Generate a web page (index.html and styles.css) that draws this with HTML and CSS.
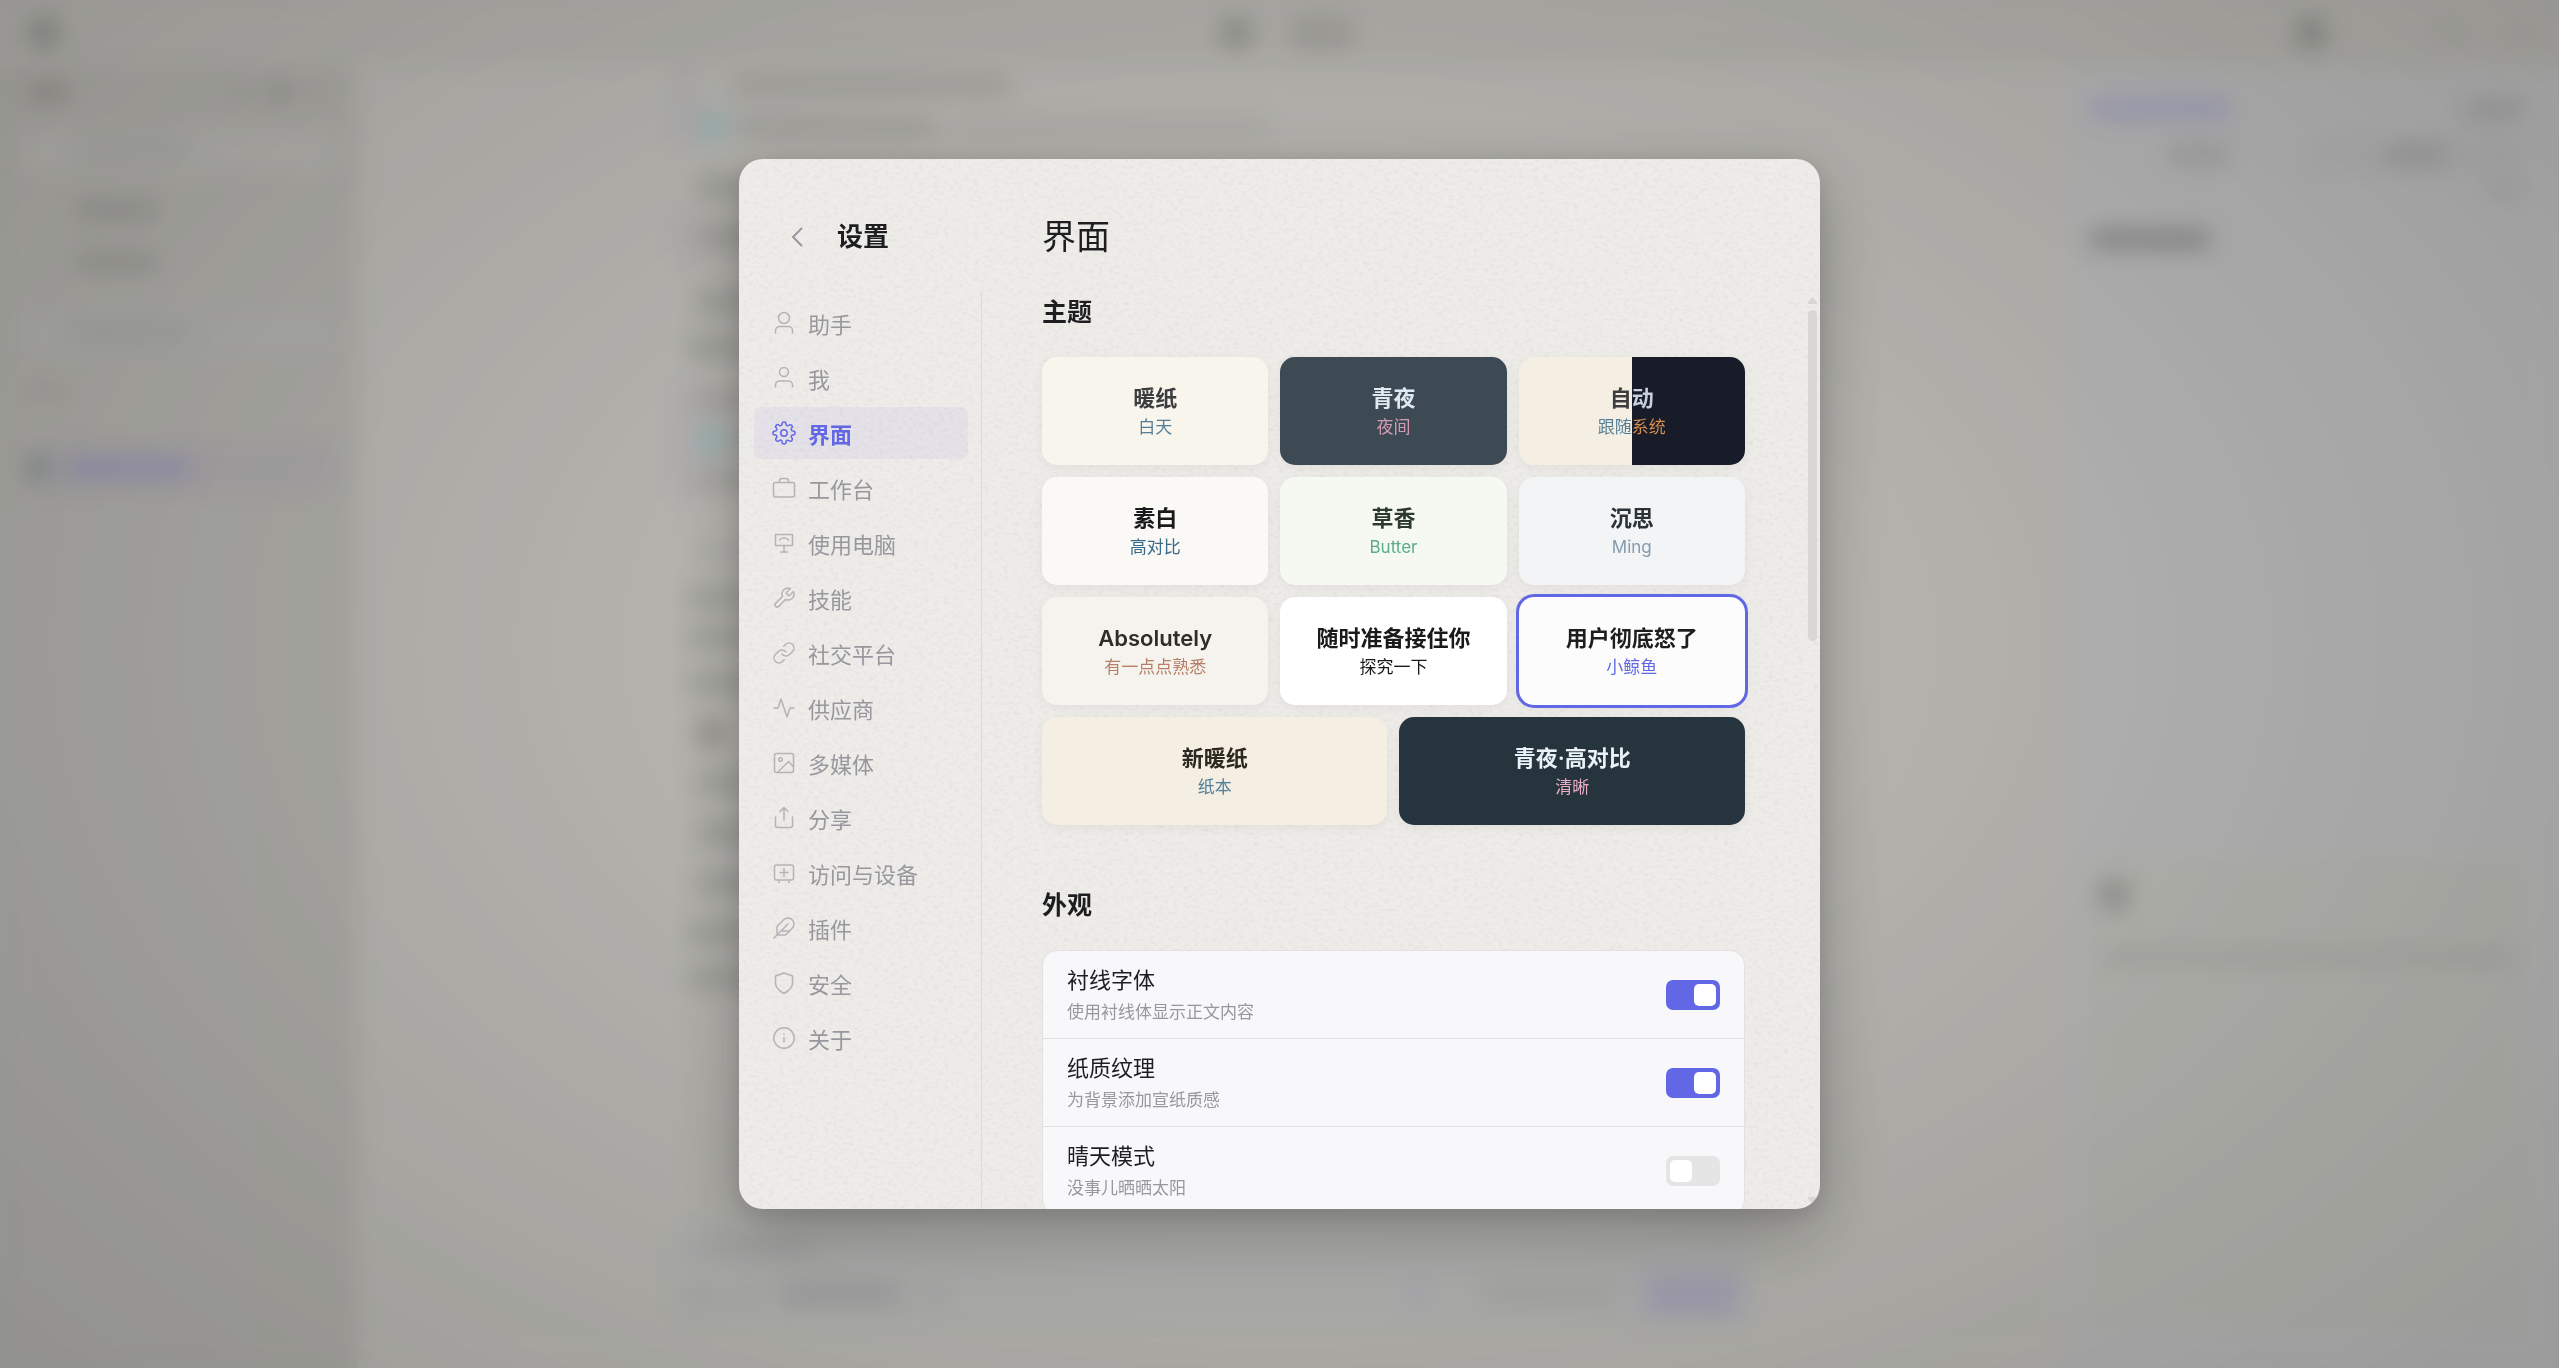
FILE: index.html
```html
<!DOCTYPE html>
<html lang="zh-CN">
<head>
<meta charset="utf-8">
<meta name="viewport" content="width=device-width, initial-scale=1">
<title>设置 - 界面</title>
<link rel="stylesheet" href="styles.css">
</head>
<body>
<div class="app" aria-hidden="true">
  <div class="topbar">
    <div class="topbar-side"><i class="blob"></i></div>
    <div class="topbar-tabs"><i class="blob"></i><i class="chip"></i></div>
    <div class="topbar-side topbar-end"><i class="blob"></i><i class="spacer-m"></i><i class="bar w20 faint"></i><i class="bar w20 faint"></i></div>
  </div>
  <div class="workspace">
    <div class="sidebar">
      <div class="side-row"><i class="bar w40"></i><i class="spacer"></i><i class="bar w20 faint"></i><i class="bar w20"></i><i class="bar w20 faint"></i></div>
      <div class="side-field"><i class="bar w120 faint"></i></div>
      <div class="side-row indent"><i class="bar w80 soft"></i></div>
      <div class="side-row indent"><i class="bar w80 soft"></i></div>
      <div class="side-field cool"><i class="bar w120 faint"></i></div>
      <div class="side-row"><i class="bar w40 faint"></i></div>
      <div class="side-row current"><i class="bar w20 green"></i><i class="bar w120 violet"></i></div>
    </div>
    <div class="main">
      <div class="chat">
        <div class="quote"><div class="line"><i class="bar w20 hidden"></i><i class="bar w280 soft"></i></div><div class="line"><i class="dot"></i><i class="bar w200 soft"></i><i class="bar w320 faint"></i></div></div>
        <div class="line tall"><i class="bar w320"></i></div>
        <div class="quote"><div class="line tall"><i class="bar w320"></i></div></div>
        <div class="line tall"><i class="bar w320"></i></div>
        <div class="line outer"><i class="bar w320"></i></div>
        <div class="quote long"><div class="line"><i class="bar w320 soft"></i></div><div class="line"><i class="dot"></i><i class="bar w320"></i></div><div class="line"><i class="bar w320 soft"></i></div></div>
        <div class="line tall"><i class="bar w320 faint"></i></div>
        <div class="line outer"><i class="bar w320"></i></div>
        <div class="line outer"><i class="bar w320"></i></div>
        <div class="line tall outer"><i class="bar w320"></i></div>
        <div class="line tall"><i class="blob"></i></div>
        <div class="line tall"><i class="bar w320"></i></div>
        <div class="line tall"><i class="bar w320"></i></div>
        <div class="line tall"><i class="bar w320"></i></div>
        <div class="line tall outer"><i class="bar w320"></i></div>
        <div class="line outer"><i class="bar w320"></i></div>
      </div>
      <div class="composer">
        <div class="composer-row"><i class="bar w120 faint"></i></div>
        <div class="composer-row"><i class="bar w20 faint"></i><i class="bar w20 faint"></i><i class="bar w120 soft"></i><i class="bar w20 faint"></i><i class="spacer"></i><i class="bar w20 violet faint"></i><i class="spacer-s"></i><i class="bar w140 faint"></i><i class="send"></i></div>
      </div>
    </div>
    <div class="panel">
      <div class="panel-row"><i class="bar w140 violet"></i><i class="spacer"></i><i class="bar w60 soft"></i></div>
      <div class="panel-tabs"><div><i class="bar w60 soft"></i></div><div class="tab-off"><i class="bar w60 soft"></i></div></div>
      <div class="panel-row thin"><i class="spacer"></i><i class="bar w40 faint"></i></div>
      <div class="panel-row heading"><i class="bar w120 strong"></i></div>
      <div class="note"><i class="blob"></i><i class="bar wide faint"></i></div>
    </div>
  </div>
</div>

<div class="overlay">
<section class="modal" role="dialog" aria-modal="true" aria-labelledby="dialog-title">
  <svg class="paper" aria-hidden="true">
    <filter id="grain" x="0" y="0" width="100%" height="100%">
      <feTurbulence type="fractalNoise" baseFrequency="0.2 0.3" numOctaves="3" seed="7"/>
      <feColorMatrix values="0 0 0 0 .4  0 0 0 0 .38  0 0 0 0 .34  .34 0 0 0 -.16"/>
    </filter>
    <rect width="100%" height="100%" filter="url(#grain)"/>
  </svg>

  <header class="side-head">
    <button class="back" type="button" aria-label="返回">
      <svg viewBox="0 0 24 24"><path d="M16.500 3.500 8 12l8.500 8.500"/></svg>
    </button>
    <h1 id="dialog-title">设置</h1>
  </header>
  <header class="page-head"><h2>界面</h2></header>

  <nav class="nav" aria-label="设置">
    <a href="#assistant"><svg viewBox="0 0 24 24"><circle cx="12" cy="7" r="5.500"/><path d="M3.500 22v-2.500a4 4 0 0 1 4-4h9a4 4 0 0 1 4 4V22"/></svg>助手</a>
    <a href="#me"><svg viewBox="0 0 24 24"><circle cx="12" cy="6" r="4.500"/><path d="M3.500 21v-2a4 4 0 0 1 4-4h9a4 4 0 0 1 4 4v2"/></svg>我</a>
    <a href="#interface" class="active" aria-current="page"><svg viewBox="0 0 24 24"><circle cx="12" cy="12" r="3.200"/><path d="M19.400 15a1.650 1.650 0 0 0 .33 1.820l.06.06a2 2 0 1 1-2.830 2.830l-.06-.06a1.650 1.650 0 0 0-2.800 1.170V21a2 2 0 0 1-4 0v-.09a1.650 1.650 0 0 0-2.880-1.260l-.06.06a2 2 0 1 1-2.830-2.830l.06-.06a1.650 1.650 0 0 0-1.170-2.800H3a2 2 0 0 1 0-4h.09a1.650 1.650 0 0 0 1.260-2.880l-.06-.06a2 2 0 1 1 2.830-2.830l.06.06a1.650 1.650 0 0 0 1.820.33H9a1.650 1.650 0 0 0 1-1.510V3a2 2 0 0 1 4 0v.09a1.650 1.650 0 0 0 2.820 1.230l.06-.06a2 2 0 1 1 2.830 2.830l-.06.06a1.650 1.650 0 0 0-.33 1.820V9a1.650 1.650 0 0 0 1.510 1H21a2 2 0 0 1 0 4h-.09a1.650 1.650 0 0 0-1.510 1z"/></svg>界面</a>
    <a href="#workbench"><svg viewBox="0 0 24 24"><rect x="1.500" y="6.500" width="21" height="14.500" rx="2"/><path d="M7.500 6.500V5a2.500 2.500 0 0 1 2.500-2.500h4A2.500 2.500 0 0 1 16.500 5v1.500"/></svg>工作台</a>
    <a href="#computer"><svg viewBox="0 0 24 24"><rect x="3.500" y="3.500" width="17" height="11"/><path d="M12 14.500V21M8.500 21h7M7.500 9q4.500-4.500 9 0"/></svg>使用电脑</a>
    <a href="#skills"><svg viewBox="0 0 24 24"><path d="M14.700 6.300a1 1 0 0 0 0 1.400l1.600 1.600a1 1 0 0 0 1.400 0l3.770-3.770a6 6 0 0 1-7.940 7.940l-6.910 6.910a2.120 2.120 0 0 1-3-3l6.910-6.910a6 6 0 0 1 7.940-7.940l-3.760 3.760z"/></svg>技能</a>
    <a href="#social"><svg viewBox="0 0 24 24"><path d="M10 13a5 5 0 0 0 7.540.54l3-3a5 5 0 0 0-7.070-7.070l-1.720 1.710"/><path d="M14 11a5 5 0 0 0-7.540-.54l-3 3a5 5 0 0 0 7.070 7.070l1.710-1.710"/></svg>社交平台</a>
    <a href="#providers"><svg viewBox="0 0 24 24"><path d="M22 12h-4l-3 9L9 3l-3 9H2"/></svg>供应商</a>
    <a href="#media"><svg viewBox="0 0 24 24"><rect x="2.500" y="2.500" width="19" height="19" rx="2"/><circle cx="8.500" cy="8.500" r="1.800"/><path d="M21.500 15.500 16.500 10.500 5.500 21.500"/></svg>多媒体</a>
    <a href="#share"><svg viewBox="0 0 24 24"><path d="M3.500 11v8.500a2 2 0 0 0 2 2h13a2 2 0 0 0 2-2V11M16 5.500l-4-4-4 4M12 1.500v13"/></svg>分享</a>
    <a href="#devices"><svg viewBox="0 0 24 24"><rect x="2.500" y="4" width="19" height="15" rx="2"/><path d="M12 7.500v8M8 11.500h8M7 19v2.500M17 19v2.500"/></svg>访问与设备</a>
    <a href="#plugins"><svg viewBox="0 0 24 24"><path d="M20.240 12.240a6 6 0 0 0-8.490-8.490L5 10.500V19h8.500z"/><path d="M16 8 2 22M17.500 15H9"/></svg>插件</a>
    <a href="#security"><svg viewBox="0 0 24 24"><path d="M12 22.500s8.500-4 8.500-10.500V5L12 2 3.500 5v7C3.500 18.500 12 22.500 12 22.500z"/></svg>安全</a>
    <a href="#about"><svg viewBox="0 0 24 24"><circle cx="12" cy="12" r="10.200"/><path d="M12 16v-4.500M12 8v.2"/></svg>关于</a>
  </nav>

  <div class="page">
    <div class="scroll">
      <section>
        <h3>主题</h3>
        <div class="themes">
          <button type="button" class="theme warm"><strong>暖纸</strong><span>白天</span></button>
          <button type="button" class="theme night"><strong>青夜</strong><span>夜间</span></button>
          <button type="button" class="theme auto"><strong>自动</strong><span>跟随系统</span></button>
          <button type="button" class="theme plain"><strong>素白</strong><span>高对比</span></button>
          <button type="button" class="theme grass"><strong>草香</strong><span>Butter</span></button>
          <button type="button" class="theme ming"><strong>沉思</strong><span>Ming</span></button>
          <button type="button" class="theme absolutely"><strong>Absolutely</strong><span>有一点点熟悉</span></button>
          <button type="button" class="theme white"><strong>随时准备接住你</strong><span>探究一下</span></button>
          <button type="button" class="theme whale selected" aria-pressed="true"><strong>用户彻底怒了</strong><span>小鲸鱼</span></button>
          <button type="button" class="theme half new-warm"><strong>新暖纸</strong><span>纸本</span></button>
          <button type="button" class="theme half night-hc"><strong>青夜·高对比</strong><span>清晰</span></button>
        </div>
      </section>
      <section>
        <h3>外观</h3>
        <div class="options">
          <label class="option"><span class="option-text"><span class="option-name">衬线字体</span><span class="option-note">使用衬线体显示正文内容</span></span><input type="checkbox" role="switch" checked></label>
          <label class="option"><span class="option-text"><span class="option-name">纸质纹理</span><span class="option-note">为背景添加宣纸质感</span></span><input type="checkbox" role="switch" checked></label>
          <label class="option"><span class="option-text"><span class="option-name">晴天模式</span><span class="option-note">没事儿晒晒太阳</span></span><input type="checkbox" role="switch"></label>
        </div>
      </section>
    </div>
    <div class="scrollbar" aria-hidden="true"><i class="arrow up"></i><i class="thumb"></i><i class="arrow down"></i></div>
  </div>
</section>
</div>
</body>
</html>
```
FILE: styles.css
```css
:root {
  --accent: #6267e6;
  --ink: #1e1e20;
  --muted: #98979e;
}

* { box-sizing: border-box; }

body {
  margin: 0;
  height: 100vh;
  overflow: hidden;
  font-family: Inter, "Noto Sans CJK SC", sans-serif;
  color: var(--ink);
}

h1, h2, h3 { margin: 0; }
button { font: inherit; border: 0; padding: 0; cursor: pointer; }

/* App behind the dialog */
.app {
  height: 100vh;
  display: flex;
  flex-direction: column;
  background: #b6b5b0;
}
.app i { display: block; flex: none; }
.app .spacer { flex: 1; }
.spacer-s { width: 4px; }
.spacer-m { width: 14px; }

.bar { height: 16px; border-radius: 4px; background: rgba(0, 0, 0, .16); }
.blob { width: 28px; height: 28px; border-radius: 8px; background: rgba(0, 0, 0, .2); }
.soft { background: rgba(0, 0, 0, .13); }
.strong { background: rgba(0, 0, 0, .28); }
.violet { background: rgba(88, 80, 210, .26); }
.green { background: rgba(40, 80, 70, .4); }
.faint { opacity: .4; }
.hidden { visibility: hidden; }
.w20 { width: 20px; }
.w40 { width: 40px; }
.w60 { width: 60px; }
.w80 { width: 80px; }
.w120 { width: 120px; }
.w140 { width: 140px; }
.w200 { width: 200px; }
.w280 { width: 280px; }
.w320 { width: 320px; }
.app .wide { width: 100%; }

.topbar {
  height: 66px;
  display: flex;
  align-items: center;
  background: rgba(0, 0, 0, .03);
}
.topbar-side { flex: 1; display: flex; align-items: center; padding: 0 30px; }
.topbar-end { justify-content: flex-end; gap: 50px; }
.topbar-tabs { display: flex; align-items: center; gap: 40px; padding-left: 16px; }
.chip { width: 64px; height: 32px; border-radius: 8px; background: rgba(0, 0, 0, .09); }

.workspace { flex: 1; min-height: 0; display: flex; }

.sidebar {
  width: 358px;
  padding: 0 22px;
  background: rgba(0, 0, 0, .06);
}
.side-row { height: 52px; display: flex; align-items: center; gap: 20px; padding: 0 6px; }
.indent { padding-left: 54px; }
.side-field {
  height: 42px;
  margin: 12px 0;
  display: flex;
  align-items: center;
  padding: 0 50px;
  border-radius: 8px;
  background: rgba(255, 255, 255, .08);
}
.cool { background: rgba(180, 182, 190, .2); margin-top: 24px; }
.current { margin-top: 24px; border-radius: 8px; background: rgba(98, 80, 200, .05); }

.main { flex: 1; display: flex; flex-direction: column; justify-content: space-between; align-items: center; padding-bottom: 43px; }
.chat { width: 1073px; }
.line { height: 40px; display: flex; align-items: center; gap: 12px; padding-left: 24px; }
.quote .line { padding-left: 4px; }
.tall { height: 50px; }
.outer { padding-left: 14px; }
.quote { margin-bottom: 16px; border-left: 24px solid rgba(110, 100, 190, .07); }
.long { margin: 12px 0 28px; }
.dot { width: 24px; height: 24px; border-radius: 50%; background: rgba(60, 170, 190, .35); }

.composer {
  width: 1085px;
  padding: 0 12px 6px;
  border-radius: 16px;
  background: rgba(178, 178, 180, .7);
}
.composer-row { height: 48px; display: flex; align-items: center; gap: 24px; padding-left: 14px; }
.send { width: 96px; height: 42px; border-radius: 10px; background: rgba(98, 90, 190, .17); }

.panel {
  width: 499px;
  display: flex;
  flex-direction: column;
  padding: 18px 36px 43px 30px;
  background: rgba(181, 181, 182, .8);
}
.panel-row { height: 50px; display: flex; align-items: center; }
.thin { height: 30px; }
.heading { margin-top: 8px; }
.panel-tabs { display: grid; grid-template-columns: 1fr 1fr; }
.panel-tabs > div { height: 42px; display: grid; place-items: center; border-radius: 8px; }
.tab-off { background: rgba(0, 0, 0, .02); }
.note { flex: none; height: 464px; margin-top: auto; padding: 20px 10px; border-radius: 10px; background: rgba(179, 181, 173, .7); }
.note .bar { margin-top: 40px; }

/* Dialog */
.overlay {
  position: fixed;
  inset: 0;
  display: grid;
  place-items: center;
  background: radial-gradient(ellipse 75% 90% at 50% 47%, rgba(0, 0, 0, .01) 30%, rgba(0, 0, 0, .17) 100%);
  backdrop-filter: blur(12px);
}

.modal {
  position: relative;
  width: min(1081px, 96vw);
  height: min(1050px, 96vh);
  display: grid;
  grid-template-columns: 243px 1fr;
  grid-template-rows: auto 1fr;
  overflow: hidden;
  isolation: isolate;
  border-radius: 24px;
  background: #eeece9;
  box-shadow: 0 24px 72px rgba(0, 0, 0, .24), 0 6px 24px rgba(0, 0, 0, .12);
}
.paper { position: absolute; inset: 0; z-index: -1; width: 100%; height: 100%; }

.side-head, .page-head {
  display: flex;
  align-items: center;
  padding: 56px 0 33px;
  line-height: 44px;
}
.side-head { gap: 18px; padding-left: 36px; }
.page-head { padding-left: 60px; }
.side-head h1 { font-size: 26px; font-weight: 700; white-space: nowrap; }
.page-head h2 { font-size: 34px; font-weight: 400; }

.back { width: 44px; height: 44px; display: grid; place-items: center; background: none; color: var(--muted); }
.back svg { width: 24px; height: 24px; stroke-width: 2; }

svg { fill: none; stroke: currentColor; stroke-width: 1.5; stroke-linecap: round; stroke-linejoin: round; }
.paper { stroke: none; fill: #000; }

.nav {
  display: flex;
  flex-direction: column;
  gap: 3px;
  padding: 5px 13px 0 15px;
  border-right: 1px solid #dcdbd8;
}
.nav a {
  height: 52px;
  display: flex;
  align-items: center;
  gap: 12px;
  padding: 0 18px;
  border-radius: 7px;
  font-size: 22px;
  color: #98979e;
  text-decoration: none;
}
.nav svg { width: 24px; height: 24px; flex: none; color: #b4b3b7; }
.nav .active { background: rgba(98, 103, 230, .07); color: var(--accent); font-weight: 700; }
.nav .active svg { color: var(--accent); }

.page { min-height: 0; display: flex; padding-right: 3px; }
.scroll {
  flex: 1;
  min-width: 0;
  overflow: hidden;
  display: flex;
  flex-direction: column;
  gap: 60px;
  padding: 0 63px 0 60px;
}
.scroll section { flex: none; }
h3 { margin-bottom: 25px; font-size: 25px; line-height: 40px; font-weight: 700; }

.themes { display: grid; grid-template-columns: repeat(6, 1fr); gap: 12px; }
.theme {
  grid-column: span 2;
  height: 108px;
  padding-top: 2px;
  display: flex;
  flex-direction: column;
  justify-content: center;
  border-radius: 15px;
  text-align: center;
  box-shadow: 0 3px 12px rgba(0, 0, 0, .05);
}
.theme strong { font-size: 22px; line-height: 30px; font-weight: 600; }
.theme span { font-size: 17px; line-height: 28px; }
.half { grid-column: span 3; }
.selected { outline: 3px solid var(--accent); }

.warm { background: #f8f5ec; color: #3b3d3f; }
.warm span { color: #537d96; }
.night { background: #3d4a54; color: #dfe9f2; }
.night span { color: #d29bb2; }
.auto { background: linear-gradient(90deg, #f4efe2 50%, #171c28 50%); }
.auto strong, .auto span { color: transparent; background-clip: text; -webkit-background-clip: text; }
.auto strong { background-image: linear-gradient(90deg, #3b3d3f 50%, #c9d1e0 50%); }
.auto span { background-image: linear-gradient(90deg, #537d96 50%, #d98f4e 50%); }
.plain { background: #faf9f5; color: #1a1a1c; }
.plain span { color: #3a6a8a; }
.grass { background: #f6f8f2; color: #2d3a31; }
.grass span { color: #5aad88; }
.ming { background: #f3f4f6; color: #2b3238; }
.ming span { color: #819cad; }
.absolutely { background: #f4f3ee; color: #2e2d2a; }
.absolutely span { color: #b97e66; }
.white { background: #fff; color: #1a1a1c; }
.whale { background: #fcfcfd; color: #1e1e20; }
.whale span { color: var(--accent); }
.new-warm { background: #f5eee2; color: #2d2822; }
.new-warm span { color: #4f809b; }
.night-hc { background: #26343d; color: #eaf2f8; }
.night-hc span { color: #eaafc5; }

.options {
  overflow: hidden;
  border: 1px solid #e1e1e3;
  border-radius: 15px;
  background: #f8f8fb;
}
.option { display: flex; align-items: center; justify-content: space-between; padding: 13px 24px; }
.option + .option { border-top: 1px solid #e1e1e3; }
.option-text { display: grid; gap: 3px; }
.option-name { font-size: 22px; line-height: 32px; }
.option-note { font-size: 17px; line-height: 26px; color: #98979e; }

.option input {
  appearance: none;
  width: 54px;
  height: 30px;
  margin: 0;
  padding: 4px;
  display: flex;
  border-radius: 7px;
  background: #e5e5e5;
}
.option input::before { content: ""; width: 22px; height: 22px; border-radius: 5px; background: #fff; }
.option input:checked { justify-content: flex-end; background: var(--accent); }

.scrollbar { width: 9px; display: flex; flex-direction: column; gap: 6px; padding: 5px 0; }
.thumb { flex: none; height: 331px; border-radius: 5px; background: #d8d7d4; }
.arrow { width: 9px; height: 7px; background: #d8d7d4; }
.up { clip-path: polygon(50% 0, 100% 75%, 100% 100%, 0 100%, 0 75%); }
.down { margin-top: auto; clip-path: polygon(0 0, 100% 0, 100% 25%, 50% 100%, 0 25%); }
```
